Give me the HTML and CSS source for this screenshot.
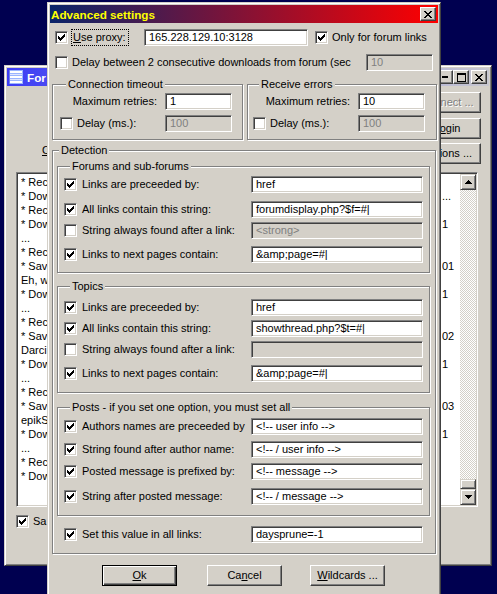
FILE: index.html
```html
<!DOCTYPE html>
<html>
<head>
<meta charset="utf-8">
<link rel="stylesheet" href="styles.css">
</head>
<body>
<div class="desktop">

  <div class="win bgwin">
    <div class="titlebar bgtitle">
      <span class="appicon">
        <svg width="16" height="16" viewBox="0 0 16 16" shape-rendering="crispEdges">
          <rect x="1" y="1" width="14" height="14" fill="#9ab4ff"/>
          <rect x="2" y="2" width="12" height="2" fill="#ffffff"/>
          <rect x="2" y="5" width="12" height="1" fill="#dfe6ff"/>
          <rect x="2" y="7" width="12" height="2" fill="#ffffff"/>
          <rect x="2" y="10" width="12" height="1" fill="#dfe6ff"/>
          <rect x="2" y="12" width="12" height="2" fill="#ffffff"/>
          <rect x="1" y="1" width="1" height="14" fill="#6f7fe8"/>
        </svg>
      </span>
      <span class="ttl">For</span>
      <span class="tbtns">
        <span class="tbtn"><svg width="6" height="2"><rect width="6" height="2" fill="#000"/></svg></span>
        <span class="tbtn"><svg width="9" height="9" shape-rendering="crispEdges"><path d="M0 0h9v2H0zM0 2h1v7H0zM8 2h1v7H8zM1 8h7v1H1z" fill="#000"/></svg></span>
        <span class="tbtn tclose"><svg width="8" height="7" shape-rendering="crispEdges"><path d="M0 0h2v1H0zM6 0h2v1H6zM1 1h2v1H1zM5 1h2v1H5zM2 2h4v1H2zM3 3h2v1H3zM2 4h4v1H2zM1 5h2v1H1zM5 5h2v1H5zM0 6h2v1H0zM6 6h2v1H6z" fill="#000"/></svg></span>
      </span>
    </div>
    <div class="bgbody">
      <div class="bgtop">
        <div class="bglabel"><u>C</u></div>
        <div class="bgbuttons">
          <div class="btn disabled">Connect ...</div>
          <div class="btn b2">L<u>o</u>gin</div>
          <div class="btn b3">Options ...</div>
        </div>
      </div>
      <div class="listbox">
        <div class="lines">
          <div class="line"><span class="l">* Rec</span><span class="r"></span></div>
          <div class="line"><span class="l">* Dow</span><span class="r">...</span></div>
          <div class="line"><span class="l">* Rec</span><span class="r"></span></div>
          <div class="line"><span class="l">* Dow</span><span class="r">1</span></div>
          <div class="line"><span class="l">...</span><span class="r"></span></div>
          <div class="line"><span class="l">* Rec</span><span class="r"></span></div>
          <div class="line"><span class="l">* Sav</span><span class="r">01</span></div>
          <div class="line"><span class="l">Eh, w</span><span class="r"></span></div>
          <div class="line"><span class="l">* Dow</span><span class="r">1</span></div>
          <div class="line"><span class="l">...</span><span class="r"></span></div>
          <div class="line"><span class="l">* Rec</span><span class="r"></span></div>
          <div class="line"><span class="l">* Sav</span><span class="r">02</span></div>
          <div class="line"><span class="l">Darci</span><span class="r"></span></div>
          <div class="line"><span class="l">* Dow</span><span class="r">1</span></div>
          <div class="line"><span class="l">...</span><span class="r"></span></div>
          <div class="line"><span class="l">* Rec</span><span class="r"></span></div>
          <div class="line"><span class="l">* Sav</span><span class="r">03</span></div>
          <div class="line"><span class="l">epikS</span><span class="r"></span></div>
          <div class="line"><span class="l">* Dow</span><span class="r">1</span></div>
          <div class="line"><span class="l">...</span><span class="r"></span></div>
          <div class="line"><span class="l">* Rec</span><span class="r"></span></div>
          <div class="line"><span class="l">* Dow</span><span class="r"></span></div>
        </div>
        <div class="vscroll">
          <div class="sbtn"><svg width="7" height="4" shape-rendering="crispEdges"><path d="M3 0h1v1h1v1h1v1h1v1H0V3h1V2h1V1h1z" fill="#000"/></svg></div>
          <div class="track"></div>
          <div class="thumb"></div>
          <div class="sbtn"><svg width="7" height="4" shape-rendering="crispEdges"><path d="M0 0h7v1H6v1H5v1H4v1H3V3H2V2H1V1H0z" fill="#000"/></svg></div>
        </div>
      </div>
      <div class="row saverow">
        <span class="cb on"></span>
        <span class="lbl ml4">Sa</span>
      </div>
    </div>
  </div>

  <div class="win dialog">
    <div class="titlebar dlgtitle">
      <span class="ttl">Advanced settings</span>
      <span class="tbtn tclose dclose"><svg width="8" height="7" shape-rendering="crispEdges"><path d="M0 0h2v1H0zM6 0h2v1H6zM1 1h2v1H1zM5 1h2v1H5zM2 2h4v1H2zM3 3h2v1H3zM2 4h4v1H2zM1 5h2v1H1zM5 5h2v1H5zM0 6h2v1H0zM6 6h2v1H6z" fill="#000"/></svg></span>
    </div>
    <div class="dlgbody">
      <div class="row r1">
        <span class="cb on"></span>
        <span class="proxylbl"><span class="focus"><u>U</u>se proxy:</span></span>
        <span class="edit proxy">165.228.129.10:3128</span>
        <span class="cb on ml7"></span>
        <span class="lbl ml4">Only for forum links</span>
      </div>
      <div class="row r2">
        <span class="cb"></span>
        <span class="lbl ml4">Delay between 2 consecutive downloads from forum (sec</span>
        <span class="edit dis short push">10</span>
      </div>

      <div class="grouprow">
        <div class="grp conn">
          <div class="lg">Connection timeout</div>
          <div class="row mt2">
            <span class="lr">Maximum retries:</span>
            <span class="edit short">1</span>
          </div>
          <div class="row mt5">
            <span class="cb"></span>
            <span class="lbl ml4 w88">Delay (ms.):</span>
            <span class="edit dis short">100</span>
          </div>
        </div>
        <div class="grp recv">
          <div class="lg">Receive errors</div>
          <div class="row mt2">
            <span class="lr">Maximum retries:</span>
            <span class="edit short">10</span>
          </div>
          <div class="row mt5">
            <span class="cb"></span>
            <span class="lbl ml4 w88">Delay (ms.):</span>
            <span class="edit dis short">100</span>
          </div>
        </div>
      </div>

      <div class="grp detect">
        <div class="lg">Detection</div>

        <div class="grp sub forums">
          <div class="lg">Forums and sub-forums</div>
          <div class="row mt3">
            <span class="cb on"></span><span class="lbl fl">Links are preceeded by:</span><span class="edit long">href</span>
          </div>
          <div class="row mt8">
            <span class="cb on"></span><span class="lbl fl">All links contain this string:</span><span class="edit long">forumdisplay.php?$f=#|</span>
          </div>
          <div class="row mt4">
            <span class="cb"></span><span class="lbl fl">String always found after a link:</span><span class="edit long dis">&lt;strong&gt;</span>
          </div>
          <div class="row mt7">
            <span class="cb on"></span><span class="lbl fl">Links to next pages contain:</span><span class="edit long">&amp;amp;page=#|</span>
          </div>
        </div>

        <div class="grp sub topics">
          <div class="lg">Topics</div>
          <div class="row mt6">
            <span class="cb on"></span><span class="lbl fl">Links are preceeded by:</span><span class="edit long">href</span>
          </div>
          <div class="row mt4">
            <span class="cb on"></span><span class="lbl fl">All links contain this string:</span><span class="edit long">showthread.php?$t=#|</span>
          </div>
          <div class="row mt4">
            <span class="cb"></span><span class="lbl fl">String always found after a link:</span><span class="edit long dis"></span>
          </div>
          <div class="row mt7">
            <span class="cb on"></span><span class="lbl fl">Links to next pages contain:</span><span class="edit long">&amp;amp;page=#|</span>
          </div>
        </div>

        <div class="grp sub posts">
          <div class="lg">Posts - if you set one option, you must set all</div>
          <div class="row mt4">
            <span class="cb on"></span><span class="lbl fl">Authors names are preceeded by</span><span class="edit long">&lt;!-- user info --&gt;</span>
          </div>
          <div class="row mt6">
            <span class="cb on"></span><span class="lbl fl">String found after author name:</span><span class="edit long">&lt;!-- / user info --&gt;</span>
          </div>
          <div class="row mt5">
            <span class="cb on"></span><span class="lbl fl">Posted message is prefixed by:</span><span class="edit long">&lt;!-- message --&gt;</span>
          </div>
          <div class="row mt8">
            <span class="cb on"></span><span class="lbl fl">String after posted message:</span><span class="edit long">&lt;!-- / message --&gt;</span>
          </div>
        </div>

        <div class="row setrow">
          <span class="cb on"></span><span class="lbl fl">Set this value in all links:</span><span class="edit long">daysprune=-1</span>
        </div>
      </div>

      <div class="btnrow">
        <div class="btn def w75"><u>O</u>k</div>
        <div class="btn w75 mlc">Ca<u>n</u>cel</div>
        <div class="btn w75 mlw"><u>W</u>ildcards ...</div>
      </div>
    </div>
  </div>

</div>
</body>
</html>
```

FILE: styles.css
```css
html, body {
  margin: 0;
  padding: 0;
}
body {
  width: 497px;
  height: 594px;
  overflow: hidden;
  background: #000050;
  font-family: "Liberation Sans", Arial, sans-serif;
  font-size: 11px;
  line-height: 13px;
  color: #000;
}
.desktop {
  position: relative;
  width: 497px;
  height: 594px;
  overflow: hidden;
}

/* windows */
.win {
  position: absolute;
  box-sizing: border-box;
  background: #d4d0c8;
  border: 1px solid;
  border-color: #d4d0c8 #404040 #404040 #d4d0c8;
  box-shadow: inset 1px 1px #ffffff, inset -1px -1px #808080;
  padding: 2px;
}
.bgwin {
  left: 4px;
  top: 65px;
  width: 488px;
  height: 501px;
}
.dialog {
  left: 47px;
  top: 2px;
  width: 394px;
  height: 600px;
}

.titlebar {
  height: 18px;
  display: flex;
  align-items: center;
}
.ttl {
  font-weight: bold;
  font-size: 11.7px;
  white-space: nowrap;
}
.dlgtitle {
  background: linear-gradient(90deg, #0a246a, #ff0000);
  color: #ffff00;
  padding-left: 1px;
}
.bgtitle {
  background: linear-gradient(90deg, #3c3cf5 0%, #7c7ce8 40%, #c8c8d0 100%);
  color: #ffffff;
}
.appicon {
  width: 16px;
  height: 16px;
  margin-left: 1px;
  margin-right: 3px;
  display: block;
}
.appicon svg { display: block; }
.tbtns {
  margin-left: auto;
  margin-right: 2px;
  display: flex;
}
.tbtn {
  box-sizing: border-box;
  width: 16px;
  height: 14px;
  background: #d4d0c8;
  border: 1px solid;
  border-color: #ffffff #404040 #404040 #ffffff;
  box-shadow: inset -1px -1px #808080;
  display: flex;
  align-items: center;
  justify-content: center;
}
.tbtn svg { display: block; }
.tclose { margin-left: 2px; }
.dclose { margin-left: auto; margin-right: 2px; }

/* controls */
.row {
  display: flex;
  align-items: center;
  height: 17px;
}
.cb {
  position: relative;
  flex: none;
  box-sizing: border-box;
  width: 13px;
  height: 13px;
  background: #ffffff;
  border: 1px solid;
  border-color: #808080 #ffffff #ffffff #808080;
  box-shadow: inset 1px 1px #404040, inset -1px -1px #d4d0c8;
}
.cb.on::after {
  content: "";
  position: absolute;
  left: 2px;
  top: 4px;
  width: 1px;
  height: 3px;
  background: #000;
  box-shadow: 1px 1px #000, 2px 2px #000, 3px 1px #000, 4px 0 #000, 5px -1px #000, 6px -2px #000;
}
.lbl {
  white-space: nowrap;
}
.edit {
  flex: none;
  box-sizing: border-box;
  height: 17px;
  background: #ffffff;
  border: 1px solid;
  border-color: #808080 #ffffff #ffffff #808080;
  box-shadow: inset 1px 1px #404040, inset -1px -1px #d4d0c8;
  padding: 1px 0 0 4px;
  line-height: 13px;
  white-space: nowrap;
  overflow: hidden;
}
.edit.dis {
  background: #d4d0c8;
  color: #808080;
}
.short { width: 67px; }
.long { width: 172px; }
.proxy { width: 164px; }
.push { margin-left: auto; }

.ml4 { margin-left: 4px; }
.ml7 { margin-left: 7px; }
.mt2 { margin-top: 2px; }
.mt3 { margin-top: 3px; }
.mt4 { margin-top: 4px; }
.mt5 { margin-top: 5px; }
.mt6 { margin-top: 6px; }
.mt7 { margin-top: 7px; }
.mt8 { margin-top: 8px; }
.w88 { width: 88px; flex: none; }

/* dialog body */
.r1 {
  height: 19px;
  margin-top: 5px;
  padding-left: 5px;
}
.proxylbl {
  width: 73px;
  margin-left: 3px;
  flex: none;
  display: flex;
}
.focus {
  border: 1px dotted #000;
  padding: 1px 2px 1px 1px;
  white-space: nowrap;
}
.r2 {
  margin-top: 7px;
  padding-left: 5px;
  padding-right: 5px;
}

.grouprow {
  display: flex;
  margin-top: 13px;
  padding-left: 2px;
}
.grp {
  box-sizing: border-box;
  border: 1px solid #808080;
  box-shadow: 1px 1px 0 #ffffff, inset 1px 1px 0 #ffffff;
}
.lg {
  display: table;
  height: 13px;
  line-height: 13px;
  margin: -7px 0 0 6px;
  padding: 0 2px;
  background: #d4d0c8;
  white-space: nowrap;
}
.conn {
  width: 191px;
  padding: 0 0 7px 7px;
}
.recv {
  width: 190px;
  margin-left: 4px;
  padding: 0 0 7px 5px;
}
.lr {
  flex: none;
  width: 97px;
  margin-right: 8px;
  text-align: right;
  white-space: nowrap;
}

.detect {
  width: 384px;
  margin: 10px 0 0 2px;
  padding-bottom: 10px;
}
.sub {
  width: 373px;
  margin-left: 4px;
  padding: 0 0 10px 6px;
}
.forums {
  margin-top: 9px;
  padding-bottom: 9px;
}
.topics { margin-top: 13px; }
.posts { margin-top: 14px; }
.fl {
  flex: none;
  width: 169px;
  margin-left: 5px;
  overflow: visible;
}
.setrow {
  margin-top: 10px;
  padding-left: 11px;
}

/* buttons */
.btn {
  box-sizing: border-box;
  height: 21px;
  background: #d4d0c8;
  border: 1px solid;
  border-color: #ffffff #404040 #404040 #ffffff;
  box-shadow: inset -1px -1px #808080;
  display: flex;
  align-items: center;
  justify-content: center;
  white-space: nowrap;
}
.btn.def {
  border-color: #000000;
  box-shadow: inset 1px 1px #ffffff, inset -1px -1px #404040, inset -2px -2px #808080;
}
.btn.disabled {
  color: #808080;
  text-shadow: 1px 1px 0 #ffffff;
}
.btnrow {
  display: flex;
  margin-top: 11px;
  padding-left: 52px;
}
.w75 { width: 75px; }
.mlc { margin-left: 30px; }
.mlw { margin-left: 28px; }

/* background window body */
.bgbody {
  padding: 6px 8px 0 9px;
}
.bgtop {
  display: flex;
  justify-content: space-between;
  align-items: flex-end;
}
.bglabel {
  margin-left: 26px;
  margin-bottom: 7px;
  white-space: nowrap;
}
.bgbuttons {
  width: 68px;
  display: flex;
  flex-direction: column;
}
.b2 { margin-top: 5px; }
.b3 { margin-top: 4px; }
.listbox {
  box-sizing: border-box;
  height: 335px;
  margin: 8px 3px 0 0;
  display: flex;
  background: #ffffff;
  border: 1px solid;
  border-color: #808080 #ffffff #ffffff #808080;
  box-shadow: inset 1px 1px #404040, inset -1px -1px #d4d0c8;
  padding: 1px;
}
.lines {
  flex: 1;
  min-width: 0;
  padding-top: 1px;
  overflow: hidden;
}
.line {
  display: flex;
  height: 14px;
  line-height: 14px;
}
.l {
  flex: none;
  padding-left: 3px;
  white-space: nowrap;
}
.r {
  flex: none;
  width: 18px;
  margin-left: auto;
  white-space: nowrap;
  overflow: hidden;
}
.vscroll {
  width: 16px;
  display: flex;
  flex-direction: column;
}
.sbtn, .thumb {
  box-sizing: border-box;
  width: 16px;
  height: 16px;
  background: #d4d0c8;
  border: 1px solid;
  border-color: #d4d0c8 #404040 #404040 #d4d0c8;
  box-shadow: inset 1px 1px #ffffff, inset -1px -1px #808080;
  display: flex;
  align-items: center;
  justify-content: center;
}
.thumb { height: 10px; }
.track {
  flex: 1;
  background-image: conic-gradient(#ffffff 25%, #d4d0c8 0 50%, #ffffff 0 75%, #d4d0c8 0);
  background-size: 2px 2px;
}
.saverow {
  margin-top: 6px;
  height: 17px;
}
```
